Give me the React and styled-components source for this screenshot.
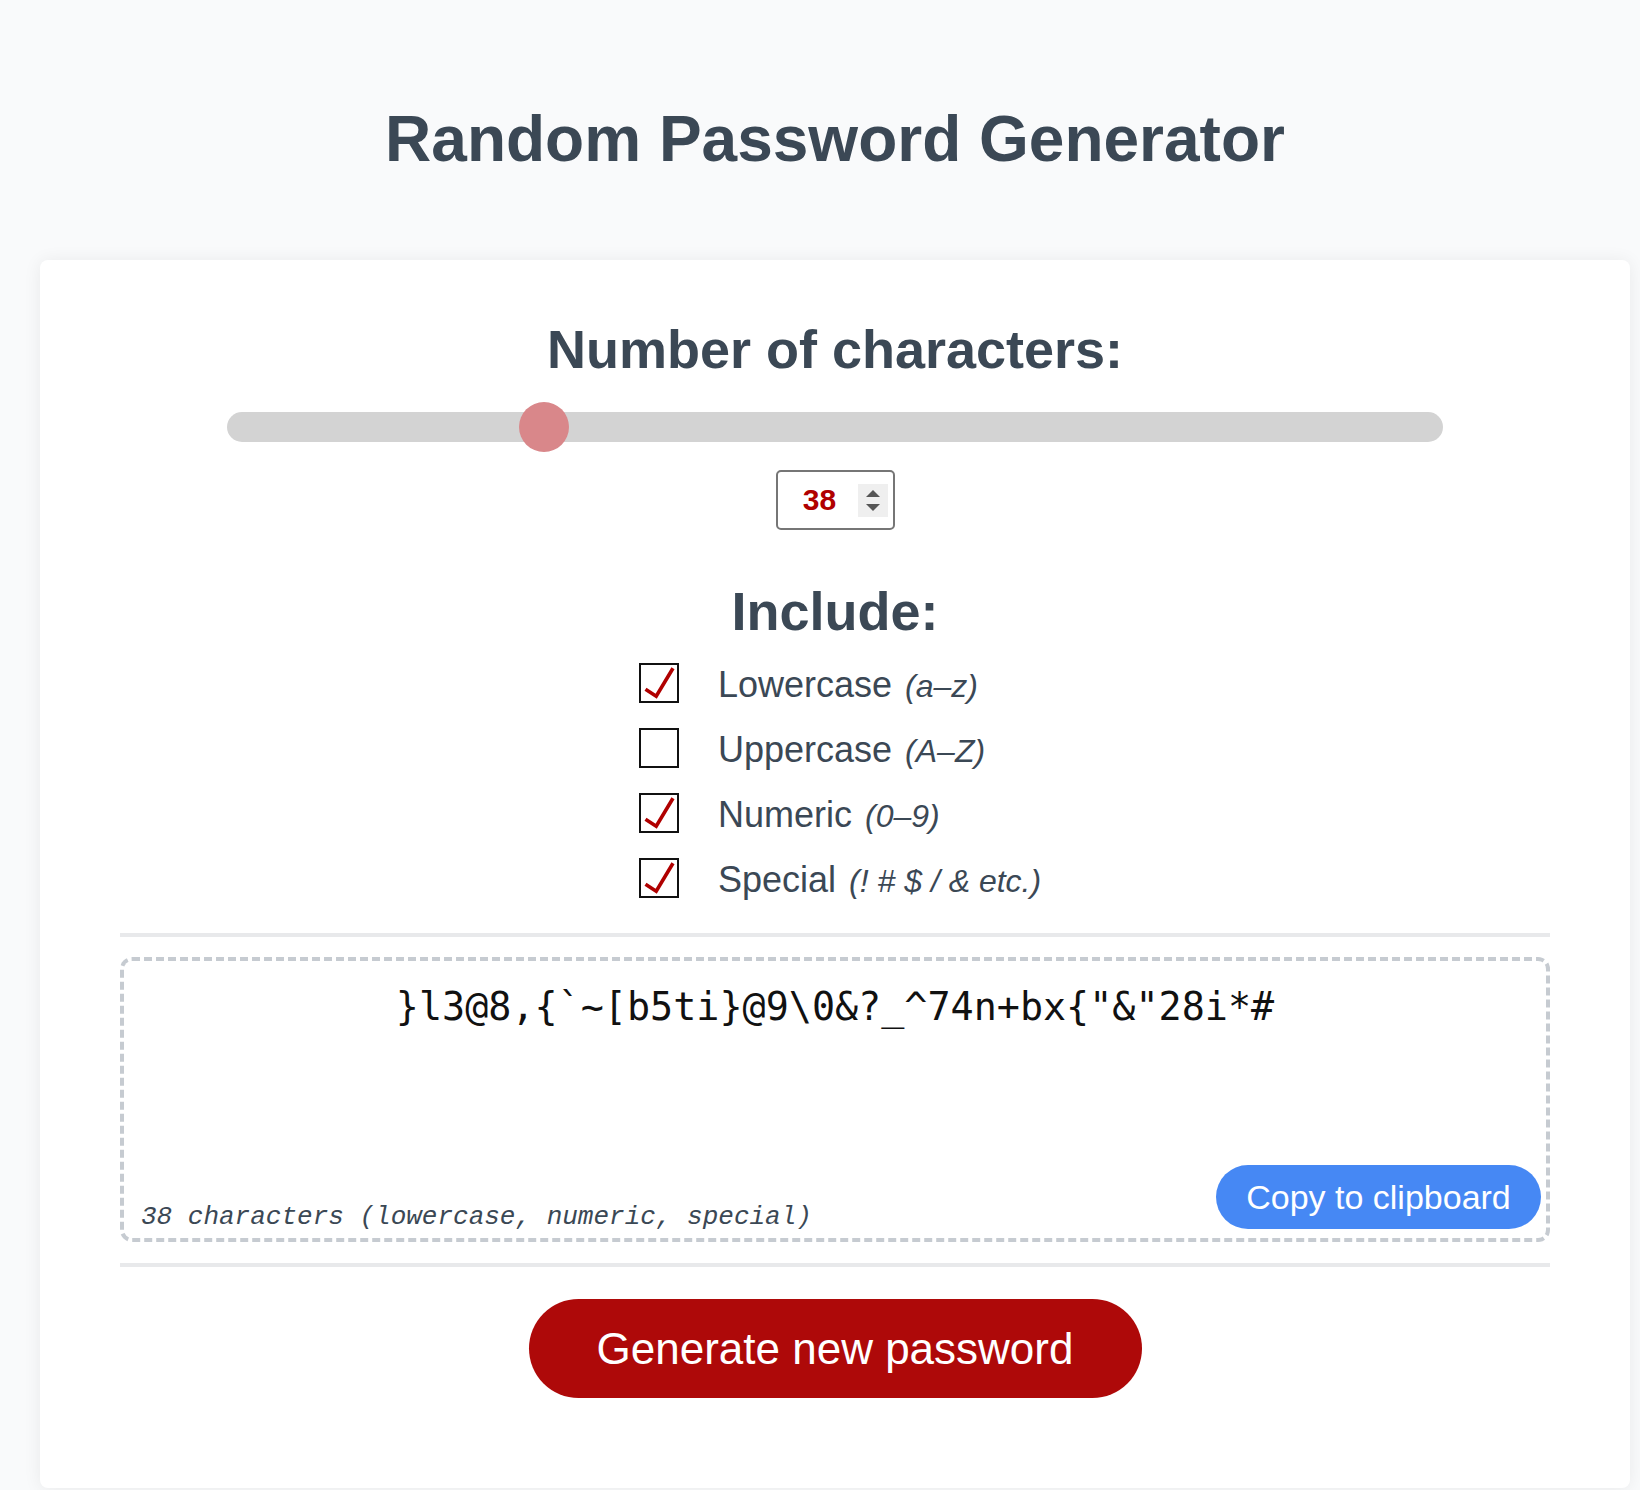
import React, { useState } from 'react';
import styled, { createGlobalStyle } from 'styled-components';

const GlobalStyle = createGlobalStyle`
  html, body { margin: 0; padding: 0; background: #f9fafb; }
  body { font-family: "Liberation Sans", Arial, sans-serif; color: #3b4855; }
  *, *::before, *::after { box-sizing: border-box; }
`;

const Page = styled.main`
  padding: 102px 10px 0 40px;
  min-height: 1490px;
`;

const Title = styled.h1`
  margin: 0;
  font-size: 64px;
  line-height: 74px;
  font-weight: 700;
  text-align: center;
  color: #3b4855;
`;

const Card = styled.section`
  margin-top: 84px;
  background: #fff;
  border-radius: 8px;
  box-shadow: 0 1px 18px rgba(0, 0, 0, 0.07);
  padding: 58px 80px 90px;
  display: flex;
  flex-direction: column;
  align-items: center;
`;

const Heading = styled.h2`
  margin: ${(p) => p.$top || 0}px 0 0;
  font-size: 54px;
  line-height: 62px;
  font-weight: 700;
  color: #3b4855;
  text-align: center;
`;

const Range = styled.input`
  -webkit-appearance: none;
  appearance: none;
  display: block;
  width: 85%;
  height: 50px;
  margin: 22px 0 0;
  padding: 0;
  background: transparent;
  outline: none;

  &::-webkit-slider-runnable-track {
    height: 30px;
    border-radius: 15px;
    background: #d3d3d3;
  }
  &::-webkit-slider-thumb {
    -webkit-appearance: none;
    appearance: none;
    width: 50px;
    height: 50px;
    margin-top: -10px;
    border: none;
    border-radius: 50%;
    background: #d9878a;
  }
`;

const NumberBox = styled.label`
  margin-top: 18px;
  width: 119px;
  height: 60px;
  border: 2px solid #767676;
  border-radius: 5px;
  display: flex;
  align-items: center;
  padding-right: 5px;
  background: #fff;
`;

const NumberInput = styled.input`
  flex: 1;
  min-width: 0;
  border: none;
  outline: none;
  background: transparent;
  text-align: center;
  font-family: "Liberation Sans", Arial, sans-serif;
  font-size: 30px;
  font-weight: 700;
  color: #b00000;
  padding: 0 0 0 4px;
  -moz-appearance: textfield;
  &::-webkit-inner-spin-button,
  &::-webkit-outer-spin-button {
    -webkit-appearance: none;
    margin: 0;
  }
`;

const Spinner = styled.span`
  width: 30px;
  height: 33px;
  background: #efefef;
  display: flex;
  flex-direction: column;
  align-items: center;
  justify-content: center;
  gap: 7px;
`;

const OptionList = styled.div`
  margin-top: 21px;
  width: 392px;
  display: flex;
  flex-direction: column;
  gap: 25px;
  white-space: nowrap;
`;

const OptionRow = styled.label`
  display: flex;
  align-items: center;
  gap: 39px;
  height: 40px;
  cursor: pointer;
`;

const HiddenCheck = styled.input`
  position: absolute;
  opacity: 0;
  width: 0;
  height: 0;
`;

const Box = styled.span`
  flex: none;
  width: 40px;
  height: 40px;
  border: 2px solid #111;
  background: #fff;
  display: flex;
`;

const OptionText = styled.span`
  font-size: 36px;
  line-height: 40px;
  padding-top: 5px;
  color: #3b4855;
`;

const Hint = styled.em`
  margin-left: 3px;
  font-size: 32px;
  font-style: italic;
`;

const Divider = styled.div`
  align-self: stretch;
  height: 4px;
  background: #e8e9eb;
  margin-top: ${(p) => p.$top}px;
`;

const Output = styled.div`
  align-self: stretch;
  margin-top: 20px;
  height: 285px;
  border: 4px dashed #c6cbd1;
  border-radius: 12px;
  display: flex;
  flex-direction: column;
  padding: 23px 5px 9px 17px;
`;

const Password = styled.div`
  font-family: "DejaVu Sans Mono", "Liberation Mono", monospace;
  font-size: 38.4px;
  line-height: 46px;
  color: #111;
  text-align: center;
  padding-right: 12px;
`;

const OutputFooter = styled.div`
  margin-top: auto;
  display: flex;
  justify-content: space-between;
  align-items: flex-end;
`;

const Caption = styled.span`
  font-family: "Liberation Mono", "Courier New", monospace;
  font-style: italic;
  font-size: 26px;
  line-height: 24px;
  color: #3b4855;
`;

const PillButton = styled.button`
  border: none;
  cursor: pointer;
  color: #fff;
  font-family: "Liberation Sans", Arial, sans-serif;
  border-radius: 999px;
  background: ${(p) => p.$bg};
  font-size: ${(p) => p.$size}px;
  width: ${(p) => p.$w}px;
  height: ${(p) => p.$h}px;
  margin-top: ${(p) => p.$top || 0}px;
  padding: 0;
`;

const PASSWORD = '}l3@8,{`~[b5ti}@9\\0&?_^74n+bx{"&"28i*#';

const OPTIONS = [
  { key: 'lower', label: 'Lowercase', hint: '(a–z)' },
  { key: 'upper', label: 'Uppercase', hint: '(A–Z)' },
  { key: 'numeric', label: 'Numeric', hint: '(0–9)' },
  { key: 'special', label: 'Special', hint: '(! # $ / & etc.)' },
];

function CheckMark() {
  return (
    <svg width="36" height="36" viewBox="0 0 36 36">
      <path
        d="M4.5 24.2 L15.2 31.2 L32 3.2"
        fill="none"
        stroke="#b00000"
        strokeWidth="3.6"
        strokeLinejoin="miter"
      />
    </svg>
  );
}

function Triangle({ up }) {
  return (
    <svg width="14" height="7" viewBox="0 0 14 7">
      <path d={up ? 'M0 7 L7 0 L14 7 Z' : 'M0 0 L7 7 L14 0 Z'} fill="#555" />
    </svg>
  );
}

export default function App() {
  const [length, setLength] = useState(38);
  const [opts, setOpts] = useState({ lower: true, upper: false, numeric: true, special: true });

  const toggle = (k) => setOpts((o) => ({ ...o, [k]: !o[k] }));

  return (
    <>
      <GlobalStyle />
      <Page>
        <Title>Random Password Generator</Title>
        <Card>
          <Heading>Number of characters:</Heading>
          <Range
            type="range"
            min={8}
            max={128}
            value={length}
            onChange={(e) => setLength(Number(e.target.value))}
          />
          <NumberBox>
            <NumberInput
              type="number"
              min={8}
              max={128}
              value={length}
              onChange={(e) => setLength(Number(e.target.value))}
            />
            <Spinner>
              <Triangle up />
              <Triangle />
            </Spinner>
          </NumberBox>

          <Heading $top={50}>Include:</Heading>
          <OptionList>
            {OPTIONS.map((o) => (
              <OptionRow key={o.key}>
                <HiddenCheck type="checkbox" checked={opts[o.key]} onChange={() => toggle(o.key)} />
                <Box>{opts[o.key] && <CheckMark />}</Box>
                <OptionText>
                  {o.label} <Hint>{o.hint}</Hint>
                </OptionText>
              </OptionRow>
            ))}
          </OptionList>

          <Divider $top={35} />
          <Output>
            <Password>{PASSWORD}</Password>
            <OutputFooter>
              <Caption>38 characters (lowercase, numeric, special)</Caption>
              <PillButton $bg="#4688f4" $size={34} $w={325} $h={64}>
                Copy to clipboard
              </PillButton>
            </OutputFooter>
          </Output>
          <Divider $top={21} />

          <PillButton $bg="#ae0909" $size={44} $w={613} $h={99} $top={32}>
            Generate new password
          </PillButton>
        </Card>
      </Page>
    </>
  );
}
